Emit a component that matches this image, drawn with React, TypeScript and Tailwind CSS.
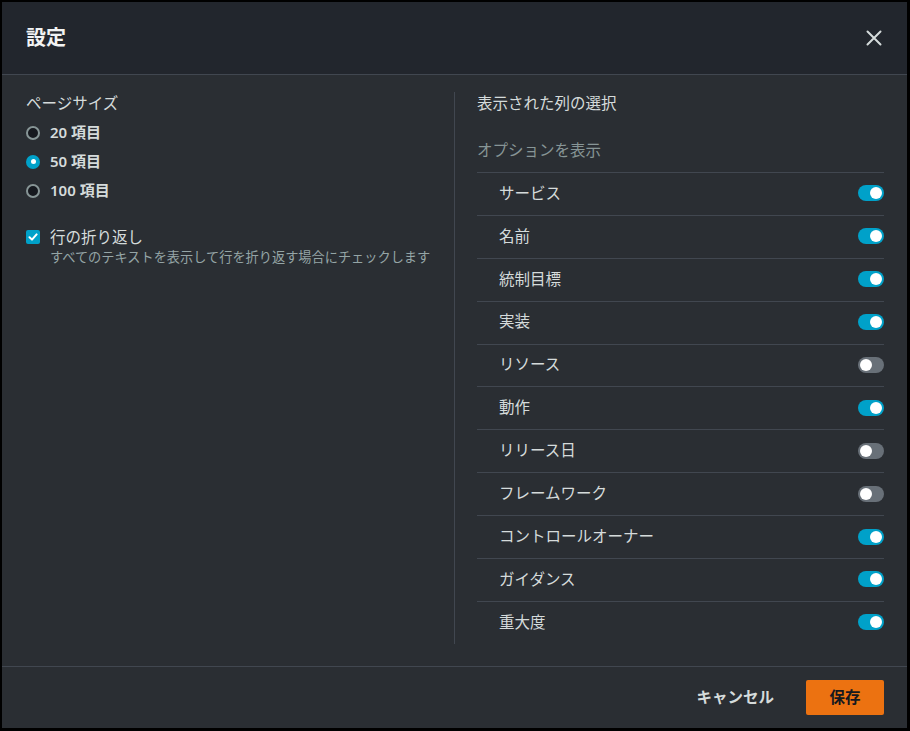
import { useState } from 'react'

const columns: { label: string; visible: boolean }[] = [
  { label: 'サービス', visible: true },
  { label: '名前', visible: true },
  { label: '統制目標', visible: true },
  { label: '実装', visible: true },
  { label: 'リソース', visible: false },
  { label: '動作', visible: true },
  { label: 'リリース日', visible: false },
  { label: 'フレームワーク', visible: false },
  { label: 'コントロールオーナー', visible: true },
  { label: 'ガイダンス', visible: true },
  { label: '重大度', visible: true },
]

const pageSizes = [20, 50, 100]

function Toggle({ on, onClick }: { on: boolean; onClick: () => void }) {
  return (
    <button
      onClick={onClick}
      className={`relative w-[26px] h-[16px] rounded-full transition-colors ${on ? 'bg-[#00a1c9]' : 'bg-[#687078]'}`}
    >
      <span
        className={`absolute top-[2px] w-[12px] h-[12px] rounded-full bg-white transition-all ${on ? 'left-[12px]' : 'left-[2px]'}`}
      />
    </button>
  )
}

function Radio({ checked }: { checked: boolean }) {
  return checked ? (
    <span className="w-[14px] h-[14px] rounded-full bg-[#00a1c9] flex items-center justify-center">
      <span className="w-[5px] h-[5px] rounded-full bg-white" />
    </span>
  ) : (
    <span className="w-[14px] h-[14px] rounded-full border-2 border-[#879596] bg-[#16191f]" />
  )
}

export default function App() {
  const [pageSize, setPageSize] = useState(50)
  const [wrap, setWrap] = useState(true)
  const [cols, setCols] = useState(columns)

  return (
    <div
      className="w-[910px] h-[731px] bg-black pt-[2px] pl-[2px] pr-[3px] pb-[3px] text-[#d5dbdb]"
      style={{ fontFamily: '"Noto Sans", "Noto Sans CJK JP", sans-serif' }}
    >
      <div className="h-full flex flex-col bg-[#2a2e33]">
        {/* Header */}
        <div className="h-[73px] shrink-0 flex items-center justify-between pl-6 pr-[25px] bg-[#22262d] border-b border-[#414750]">
          <h2 className="text-[20px] font-bold text-[#f2f3f3] leading-none -mt-[1px]">設定</h2>
          <button className="w-4 h-4 flex items-center justify-center">
            <svg width="16" height="16" viewBox="0 0 16 16" fill="none" stroke="#d5dbdb" strokeWidth="2" strokeLinecap="round">
              <path d="M1.5 1.5 L14.5 14.5 M14.5 1.5 L1.5 14.5" />
            </svg>
          </button>
        </div>

        {/* Body */}
        <div className="flex-1 flex pl-6 pr-[23px] pt-[17px] pb-[22px]">
          <div className="w-[429px] border-r border-[#414750]">
            <div className="text-[15.5px] leading-[22px]">ページサイズ</div>
            <div className="mt-[4px] flex flex-col">
              {pageSizes.map((size) => (
                <label
                  key={size}
                  onClick={() => setPageSize(size)}
                  className="h-[29px] flex items-center gap-[10px] cursor-pointer"
                >
                  <Radio checked={pageSize === size} />
                  <span className="text-[15px] font-semibold">{size} 項目</span>
                </label>
              ))}
            </div>

            <div className="mt-[21px] flex gap-[10px] cursor-pointer" onClick={() => setWrap(!wrap)}>
              <span
                className={`mt-[4px] w-[14px] h-[14px] rounded-[2px] flex items-center justify-center ${wrap ? 'bg-[#00a1c9]' : 'border-2 border-[#879596] bg-[#16191f]'}`}
              >
                {wrap && (
                  <svg width="10" height="10" viewBox="0 0 10 10" fill="none" stroke="white" strokeWidth="2" strokeLinecap="round" strokeLinejoin="round">
                    <path d="M1.5 5.2 L4 7.6 L8.6 2.4" />
                  </svg>
                )}
              </span>
              <div>
                <div className="text-[15.5px] leading-[22px]">行の折り返し</div>
                <div className="text-[13.2px] leading-[18px] text-[#95a5a6]">
                  すべてのテキストを表示して行を折り返す場合にチェックします
                </div>
              </div>
            </div>
          </div>

          <div className="flex-1 pl-[22px]">
            <div className="text-[15.5px] leading-[22px]">表示された列の選択</div>
            <div className="mt-[25px] text-[15.5px] leading-[22px] text-[#879596]">オプションを表示</div>
            <div className="mt-[11px]">
              {cols.map((c, i) => (
                <div
                  key={c.label}
                  className="h-[42.9px] border-t border-[#414750] flex items-center justify-between pl-[22px] pb-[1px]"
                >
                  <span className="text-[15.5px]">{c.label}</span>
                  <Toggle
                    on={c.visible}
                    onClick={() =>
                      setCols(cols.map((x, j) => (j === i ? { ...x, visible: !x.visible } : x)))
                    }
                  />
                </div>
              ))}
            </div>
          </div>
        </div>

        {/* Footer */}
        <div className="h-[62px] shrink-0 border-t border-[#414750] flex items-center justify-end pr-[23px] gap-[12px]">
          <button className="px-5 h-[34px] text-[15.5px] font-bold text-[#d5dbdb]">キャンセル</button>
          <button className="w-[78px] h-[35px] rounded-[2px] bg-[#ec7211] text-[15.5px] font-bold text-[#16191f]">
            保存
          </button>
        </div>
      </div>
    </div>
  )
}
